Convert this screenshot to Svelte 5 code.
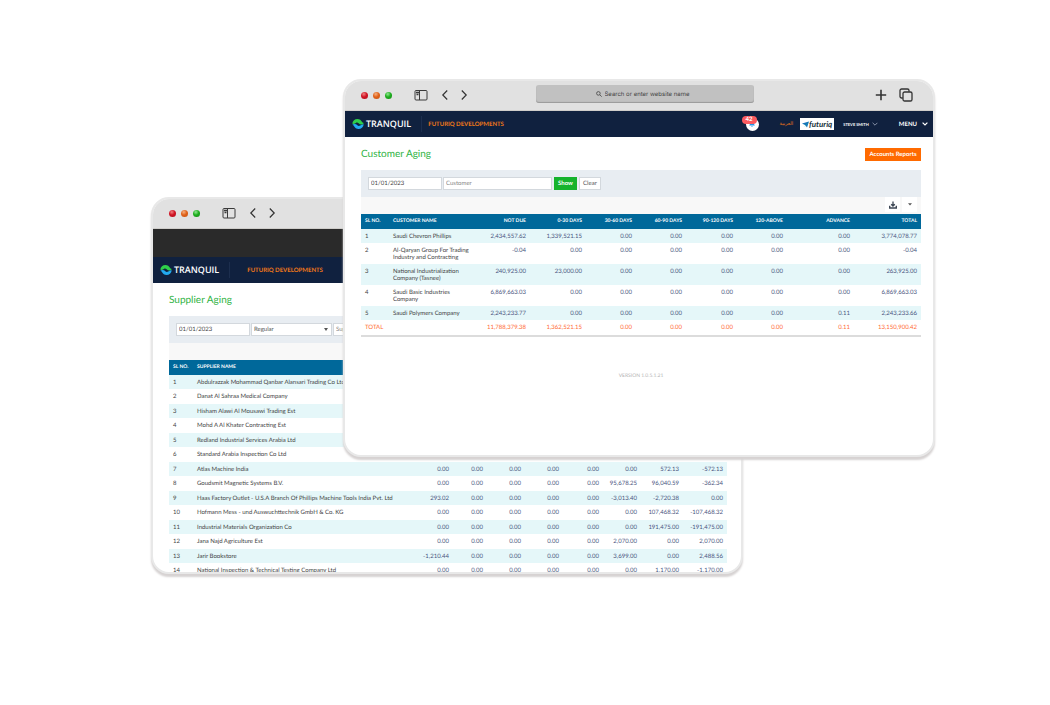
<script lang="ts">
  type Row = { name: string; amounts: string[] };

  const ageing = [
    "Not due",
    "0-30 days",
    "30-60 days",
    "60-90 days",
    "90-120 days",
    "120-above",
    "Advance",
    "Total",
  ];

  const customers: Row[] = [
    {
      name: "Saudi Chevron Phillips",
      amounts: ["2,434,557.62", "1,339,521.15", "0.00", "0.00", "0.00", "0.00", "0.00", "3,774,078.77"],
    },
    {
      name: "Al-Qaryan Group For Trading Industry and Contracting",
      amounts: ["-0.04", "0.00", "0.00", "0.00", "0.00", "0.00", "0.00", "-0.04"],
    },
    {
      name: "National Industrialization Company (Tasnee)",
      amounts: ["240,925.00", "23,000.00", "0.00", "0.00", "0.00", "0.00", "0.00", "263,925.00"],
    },
    {
      name: "Saudi Basic Industries Company",
      amounts: ["6,869,663.03", "0.00", "0.00", "0.00", "0.00", "0.00", "0.00", "6,869,663.03"],
    },
    {
      name: "Saudi Polymers Company",
      amounts: ["2,243,233.77", "0.00", "0.00", "0.00", "0.00", "0.00", "0.11", "2,243,233.66"],
    },
  ];

  const customerTotal = [
    "11,788,379.38",
    "1,362,521.15",
    "0.00",
    "0.00",
    "0.00",
    "0.00",
    "0.11",
    "13,150,900.42",
  ];

  const none = ["0.00", "0.00", "0.00", "0.00", "0.00", "0.00", "0.00", "0.00"];

  const suppliers: Row[] = [
    { name: "Abdulrazzak Mohammad Qanbar Alansari Trading Co Ltd", amounts: none },
    { name: "Danat Al Sahraa Medical Company", amounts: none },
    { name: "Hisham Alawi Al Mousawi Trading Est", amounts: none },
    { name: "Mohd A Al Khater Contracting Est", amounts: none },
    { name: "Redland Industrial Services Arabia Ltd", amounts: none },
    { name: "Standard Arabia Inspection Co Ltd", amounts: none },
    {
      name: "Atlas Machine India",
      amounts: ["0.00", "0.00", "0.00", "0.00", "0.00", "0.00", "572.13", "-572.13"],
    },
    {
      name: "Goudsmit Magnetic Systems B.V.",
      amounts: ["0.00", "0.00", "0.00", "0.00", "0.00", "95,678.25", "96,040.59", "-362.34"],
    },
    {
      name: "Haas Factory Outlet - U.S.A Branch Of Phillips Machine Tools India Pvt. Ltd",
      amounts: ["293.02", "0.00", "0.00", "0.00", "0.00", "-3,013.40", "-2,720.38", "0.00"],
    },
    {
      name: "Hofmann Mess - und Auswuchttechnik GmbH & Co. KG",
      amounts: ["0.00", "0.00", "0.00", "0.00", "0.00", "0.00", "107,468.32", "-107,468.32"],
    },
    {
      name: "Industrial Materials Organization Co",
      amounts: ["0.00", "0.00", "0.00", "0.00", "0.00", "0.00", "191,475.00", "-191,475.00"],
    },
    {
      name: "Jana Najd Agriculture Est",
      amounts: ["0.00", "0.00", "0.00", "0.00", "0.00", "2,070.00", "0.00", "2,070.00"],
    },
    {
      name: "Jarir Bookstore",
      amounts: ["-1,210.44", "0.00", "0.00", "0.00", "0.00", "3,699.00", "0.00", "2,488.56"],
    },
    {
      name: "National Inspection & Technical Testing Company Ltd",
      amounts: ["0.00", "0.00", "0.00", "0.00", "0.00", "0.00", "1,170.00", "-1,170.00"],
    },
  ];

  const customerCols = [57, 56, 50, 50, 51, 50, 67, 67];
  const supplierCols = [40, 34, 38, 38, 40, 38, 42, 44];
</script>

{#snippet chrome()}
  <div class="chrome">
    <div class="chrome-left">
      <span class="dots"><i class="red"></i><i class="amber"></i><i class="green"></i></span>
      <button class="icon" aria-label="Sidebar">
        <svg width="14" height="12" viewBox="0 0 14 12" fill="none" stroke="#3a3a3a">
          <rect x="1" y="1.5" width="12" height="9.5" rx="1" />
          <path d="M5.5 1.5V11" />
          <path d="M2 3.5h3M2.5 5.5h2" stroke-width="1.6" />
        </svg>
      </button>
      <span class="arrows">
        <button class="icon" aria-label="Back">
          <svg width="8" height="12" viewBox="0 0 8 12" fill="none" stroke="#333" stroke-width="1.2">
            <path d="M6.2 1.5 1.8 6l4.4 4.5" />
          </svg>
        </button>
        <button class="icon" aria-label="Forward">
          <svg width="8" height="12" viewBox="0 0 8 12" fill="none" stroke="#333" stroke-width="1.2">
            <path d="M1.8 1.5 6.2 6l-4.4 4.5" />
          </svg>
        </button>
      </span>
    </div>
    <label class="address">
      <svg width="6" height="6" viewBox="0 0 6 6" fill="none" stroke="#444" stroke-width="0.8">
        <circle cx="2.4" cy="2.4" r="1.8" />
        <path d="M3.8 3.8 5.7 5.7" />
      </svg>
      <input type="text" placeholder="Search or enter website name" aria-label="Address" />
    </label>
    <div class="chrome-right">
      <button class="icon" aria-label="New tab">
        <svg width="12" height="12" viewBox="0 0 12 12" stroke="#333" stroke-width="1.6">
          <path d="M6 .8v10.4M.8 6h10.4" />
        </svg>
      </button>
      <button class="icon" aria-label="Tabs">
        <svg width="14" height="14" viewBox="0 0 14 14" fill="none" stroke="#333" stroke-width="1.3">
          <path d="M3.8 10H2.6A1.6 1.6 0 0 1 1 8.4V2.6A1.6 1.6 0 0 1 2.6 1h5.8A1.6 1.6 0 0 1 10 2.6V3.8" />
          <rect x="4" y="4" width="9" height="9" rx="1.6" />
        </svg>
      </button>
    </div>
  </div>
{/snippet}

{#snippet brand()}
  <a class="brand" href="#home">
    <svg width="12" height="12" viewBox="0 0 12 12">
      <path
        d="M.3 5.600C.6 3 2.800 1 5.400 1c2.200 0 3.700 1.200 4.500 2.700.4.800 1 1.100 1.900 1.200C10.700 7 8.200 7 6.900 5.600 6.100 4.700 5 4.300 3.900 4.900 2.600 5.600 1.400 6.300.3 5.600z"
        fill="#2fd04a"
      />
      <path
        d="M11.700 6.400C11.400 9 9.200 11 6.600 11c-2.200 0-3.700-1.200-4.500-2.700C1.700 7.500 1.100 7.200.2 7.100 1.300 5.900 3.800 5.600 5.100 7 5.900 7.900 7 8.200 8.100 7.600 9.400 6.900 10.600 5.900 11.700 6.400z"
        fill="#22aaf0"
      />
    </svg>
    TRANQUIL
  </a>
  <span class="company">FUTURIQ DEVELOPMENTS</span>
{/snippet}

{#snippet exportBar()}
  <div class="export">
    <button aria-label="Download">
      <svg width="8" height="8" viewBox="0 0 8 8" fill="none" stroke="#3c4654">
        <path d="M.7 4.800V7h6.600V4.800" stroke-width="1.400" />
        <path d="M4 .6v4M2.200 3.200 4 5l1.800-1.800" stroke-width="1.300" />
      </svg>
    </button>
    <button aria-label="More formats">
      <svg width="4" height="3" viewBox="0 0 4 3" fill="#555"><path d="M0 .3h4L2 2.500z" /></svg>
    </button>
  </div>
{/snippet}

{#snippet ledger(label: string, slWidth: number, cols: number[], rows: Row[], total: string[] | null)}
  <table>
    <colgroup>
      <col style="width: {slWidth}px" />
      <col />
      {#each cols as width}
        <col style="width: {width}px" />
      {/each}
    </colgroup>
    <thead>
      <tr>
        <th>Sl no.</th>
        <th>{label}</th>
        {#each ageing as bucket}
          <th class="num">{bucket}</th>
        {/each}
      </tr>
    </thead>
    <tbody>
      {#each rows as row, i}
        <tr>
          <td>{i + 1}</td>
          <td>{row.name}</td>
          {#each row.amounts as amount}
            <td class="num">{amount}</td>
          {/each}
        </tr>
      {/each}
    </tbody>
    {#if total}
      <tfoot>
        <tr>
          <td colspan="2">TOTAL</td>
          {#each total as amount}
            <td class="num">{amount}</td>
          {/each}
        </tr>
      </tfoot>
    {/if}
  </table>
{/snippet}

<div class="desktop">
  <section class="window back">
    {@render chrome()}
    <div class="band"></div>
    <nav>{@render brand()}</nav>
    <main>
      <header><h1>Supplier Aging</h1></header>
      <form class="filters">
        <input class="date" type="text" value="01/01/2023" aria-label="Date" />
        <select aria-label="Supplier type">
          <option>Regular</option>
        </select>
        <input class="party" type="text" placeholder="Supplier" aria-label="Supplier" />
      </form>
      {@render exportBar()}
      {@render ledger("Supplier name", 24, supplierCols, suppliers, null)}
    </main>
  </section>

  <section class="window front">
    {@render chrome()}
    <nav>
      {@render brand()}
      <div class="nav-right">
        <button class="bell" aria-label="Notifications">
          <svg width="8" height="8" viewBox="0 0 8 8" fill="#2196e8">
            <path d="M4 .6C2.500.6 2 1.800 2 3c0 1.400-.4 2-.9 2.500h5.800C6.400 5 6 4.400 6 3 6 1.800 5.500.6 4 .6zM3.200 6h1.600a.8.8 0 0 1-1.600 0z" />
          </svg>
          <span class="count">42</span>
        </button>
        <a class="lang" href="#ar" lang="ar">العربية</a>
        <span class="client">
          <svg width="7" height="7" viewBox="0 0 7 7">
            <path d="M0 2.600 7 .4 5 6.600 3.500 4.200z" fill="#1473b8" />
            <path d="M7 .4 3.500 4.200 2.600 6z" fill="#19b3a6" />
          </svg>
          futuriq
        </span>
        <button class="user">
          STEVE SMITH
          <svg width="6" height="4" viewBox="0 0 6 4" fill="none" stroke="#b8c2d4" stroke-width="0.7">
            <path d="M.6.8 3 3.200 5.400.8" />
          </svg>
        </button>
        <button class="menu">
          MENU
          <svg width="6" height="4" viewBox="0 0 6 4" fill="none" stroke="#fff" stroke-width="1.200">
            <path d="M.6.6 3 3 5.400.6" />
          </svg>
        </button>
      </div>
    </nav>
    <main>
      <header>
        <h1>Customer Aging</h1>
        <button class="reports">Accounts Reports</button>
      </header>
      <form class="filters">
        <input class="date" type="text" value="01/01/2023" aria-label="Date" />
        <input class="party" type="text" placeholder="Customer" aria-label="Customer" />
        <button type="button" class="show">Show</button>
        <button type="reset" class="clear">Clear</button>
      </form>
      {@render exportBar()}
      {@render ledger("Customer name", 28, customerCols, customers, customerTotal)}
      <footer>VERSION 1.0.5.1.21</footer>
    </main>
  </section>
</div>

<style>
  :global(body) {
    margin: 0;
    background: #fff;
  }

  .desktop {
    display: grid;
    padding: 79px 115px 79px 151px;
    font-family: Lato, "Liberation Sans", sans-serif;
    font-size: 6px;
    line-height: 7px;
    color: #444;
    text-rendering: geometricPrecision;
  }

  .window {
    grid-area: 1 / 1;
    align-self: start;
    box-sizing: border-box;
    width: calc(100% - 192px);
    border: 2px solid #e8e8e8;
    border-radius: 18px;
    background: #fff;
    box-shadow: 0 3px 2px #d6d2d2;
    overflow: hidden;
  }

  .back {
    margin-top: 118px;
    max-height: 377px;
  }

  .front {
    justify-self: end;
    z-index: 1;
  }

  button,
  input,
  select {
    box-sizing: border-box;
    margin: 0;
    padding: 0;
    border: 0;
    border-radius: 0;
    background: none;
    font: inherit;
    color: inherit;
    text-rendering: inherit;
  }

  button {
    cursor: pointer;
  }

  svg {
    display: block;
    flex: none;
  }

  a {
    color: inherit;
    text-decoration: none;
  }

  /* browser bar */
  .chrome {
    display: grid;
    grid-template-columns: 1fr 218px 1fr;
    align-items: center;
    height: 30px;
    padding: 0 4px 1px 16px;
    background: #e1e1e1;
    box-sizing: border-box;
    border-bottom: 1px solid #cfcdca;
  }

  .chrome-left,
  .chrome-right,
  .dots,
  .arrows {
    display: flex;
    align-items: center;
  }

  .chrome-left {
    gap: 22px;
  }

  .dots {
    gap: 5px;
  }

  .dots i {
    width: 7px;
    height: 7px;
    border-radius: 50%;
  }

  .red {
    background: radial-gradient(circle at 40% 30%, #f08080, #d01525 45%, #b00f1c);
  }

  .amber {
    background: radial-gradient(circle at 40% 30%, #f5b080, #e0621a 45%, #c4510f);
  }

  .green {
    background: radial-gradient(circle at 40% 30%, #90e890, #1fae1f 45%, #128a12);
  }

  .arrows {
    gap: 11px;
    margin-left: -9px;
  }

  .chrome-right {
    justify-content: flex-end;
    gap: 12px;
    padding-right: 16px;
  }

  .address {
    display: flex;
    align-items: center;
    justify-content: center;
    gap: 3px;
    height: 18px;
    border-radius: 3px;
    background: #c1c1c1;
    box-shadow: inset 0 -1px 1px #999;
    align-self: start;
    margin-top: 4px;
  }

  .address input {
    width: 90px;
    font-family: Inter, sans-serif;
    font-size: 6px;
  }

  .address input::placeholder {
    color: #444;
    opacity: 1;
  }

  .band {
    height: 28px;
    background: #2a2a2a;
  }

  /* app header */
  nav {
    display: flex;
    align-items: center;
    height: 26px;
    padding: 0 5px 0 7px;
    background: #10213f;
    color: #fff;
  }

  .brand {
    display: flex;
    align-items: center;
    gap: 2px;
    font: 600 9px/12px "Open Sans", sans-serif;
  }

  .company {
    margin-left: 10px;
    padding: 2px 0 0 6px;
    border-left: 1px solid #1c2e4e;
    font-weight: 700;
    line-height: 14px;
    color: #f07818;
  }

  .back .company {
    padding-left: 17px;
  }

  .nav-right {
    display: flex;
    align-items: center;
    margin-left: auto;
  }

  .bell {
    position: relative;
    display: grid;
    place-items: center;
    width: 13px;
    height: 13px;
    margin-right: 21px;
    border-radius: 50%;
    background: #fff;
  }

  .count {
    position: absolute;
    top: -2px;
    left: -4px;
    width: 15px;
    border-radius: 4px;
    background: #fb5b60;
    font-weight: 700;
    line-height: 8px;
    color: #fff;
  }

  .lang {
    margin-right: 7px;
    font: 5px/8px "DejaVu Sans", sans-serif;
    color: #f07818;
  }

  .client {
    display: flex;
    align-items: center;
    justify-content: center;
    width: 34px;
    height: 12px;
    margin-right: 9px;
    background: #fff;
    font-size: 8px;
    font-style: italic;
    font-weight: 700;
    color: #17323c;
  }

  .user,
  .menu {
    display: flex;
    align-items: center;
    gap: 3px;
    font-size: 4px;
    font-weight: 700;
  }

  .menu {
    gap: 5px;
    margin-left: 21px;
    font-size: 6px;
  }

  /* report */
  main {
    padding: 0 12px 0 16px;
  }

  .back main {
    padding-right: 14px;
  }

  header {
    display: flex;
    align-items: center;
    justify-content: space-between;
    box-sizing: border-box;
    height: 33px;
    padding-top: 1px;
  }

  h1 {
    margin: 0;
    font-size: 10px;
    font-weight: 400;
    line-height: 12px;
    color: #2fb344;
  }

  .reports {
    width: 56px;
    height: 13px;
    background: #ff6a00;
    font-weight: 700;
    color: #fff;
  }

  .filters {
    display: flex;
    align-items: center;
    gap: 1px;
    height: 27px;
    padding: 0 7px;
    background: #e8edf2;
  }

  .filters input,
  .filters select,
  .filters button {
    height: 13px;
    border: 1px solid #d3d8dd;
    background: #fff;
    color: #555;
  }

  .filters input {
    padding: 0 2px;
  }

  .filters input::placeholder {
    color: #888;
    opacity: 1;
  }

  .filters .date {
    width: 74px;
    color: #444;
  }

  .party {
    width: 109px;
  }

  select {
    width: 81px;
    padding: 0 2px;
    appearance: none;
  }

  .filters select {
    background: #fff
      url("data:image/svg+xml,%3Csvg xmlns='http://www.w3.org/2000/svg' width='4' height='3'%3E%3Cpath d='M0 0h4L2 3z' fill='%23555'/%3E%3C/svg%3E")
      no-repeat right 3px center;
  }

  .filters button {
    width: 23px;
    margin-left: 1px;
  }

  .filters .clear {
    width: 22px;
  }

  .filters .show {
    border-color: #16b32c;
    background: #16b32c;
    font-weight: 700;
    color: #fff;
  }

  .export {
    display: flex;
    justify-content: flex-end;
    gap: 2px;
    height: 17px;
    padding-right: 4px;
    background: #f8f8f8;
  }

  .export button {
    display: grid;
    place-items: center;
    width: 15px;
    height: 15px;
    background: #fff;
  }

  table {
    width: 100%;
    table-layout: fixed;
    border-collapse: collapse;
  }

  th,
  td {
    padding: 4px 4px 3px;
    text-align: left;
    vertical-align: top;
  }

  th {
    padding: 4px;
    background: #00689a;
    font-size: 5px;
    font-weight: 700;
    text-transform: uppercase;
    white-space: nowrap;
    color: #fff;
  }

  .num {
    text-align: right;
  }

  td.num {
    color: #4a5580;
  }

  tbody tr:nth-child(odd) {
    background: #e5f7f9;
  }

  .back tbody tr:nth-child(even) {
    height: 15px;
  }

  tfoot tr {
    height: 16px;
    border-bottom: 2px solid #dcdcdc;
  }

  tfoot td,
  tfoot td.num {
    color: #ff6b35;
  }

  footer {
    padding: 36px 0 75px;
    font-size: 5px;
    text-align: center;
    color: #b5b5b5;
  }
</style>
